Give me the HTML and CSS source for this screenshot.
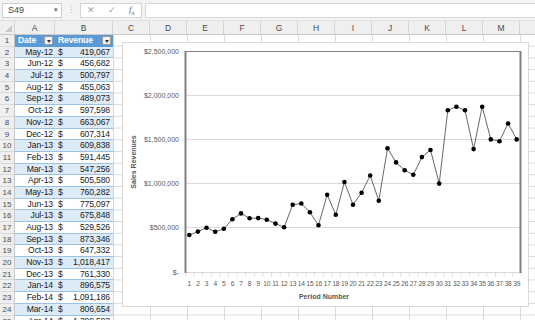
FILE: index.html
```html
<!DOCTYPE html>
<html>
    <head>
        <link rel="stylesheet" href="styles.css">
    </head>
    <body>
        <div class="toolbar">
            <div class="namebox">S49<span class="caret">&#9662;</span></div>
            <span class="grip">&#8942;</span>
            <div class="fxbox">
                <span class="fxicon">&#10005;</span>
                <span class="fxicon">&#10003;</span>
                <span class="fxicon fx"><i>f</i><sub>x</sub></span>
            </div>
            <div class="formula"></div>
        </div>

        <div class="colheads">
            <div class="corner"></div>
            <div class="ch col-a">A</div>
            <div class="ch col-b">B</div>
            <div class="ch">C</div>
            <div class="ch">D</div>
            <div class="ch">E</div>
            <div class="ch">F</div>
            <div class="ch">G</div>
            <div class="ch">H</div>
            <div class="ch">I</div>
            <div class="ch">J</div>
            <div class="ch">K</div>
            <div class="ch">L</div>
            <div class="ch">M</div>
            <div class="ch"></div>
        </div>

        <div class="sheet">
            <div class="rownums">
                <div>1</div><div>2</div><div>3</div><div>4</div><div>5</div>
                <div>6</div><div>7</div><div>8</div><div>9</div><div>10</div>
                <div>11</div><div>12</div><div>13</div><div>14</div><div>15</div>
                <div>16</div><div>17</div><div>18</div><div>19</div><div>20</div>
                <div>21</div><div>22</div><div>23</div><div>24</div><div>25</div>
            </div>

            <div class="table">
                <div class="row head">
                    <div class="cell-a">Date<span class="filter"></span></div>
                    <div class="cell-b">Revenue<span class="filter"></span></div>
                </div>
                <div class="row band"><div class="cell-a">May-12</div><div class="cell-b"><span>$</span>419,067</div></div>
                <div class="row"><div class="cell-a">Jun-12</div><div class="cell-b"><span>$</span>456,682</div></div>
                <div class="row band"><div class="cell-a">Jul-12</div><div class="cell-b"><span>$</span>500,797</div></div>
                <div class="row"><div class="cell-a">Aug-12</div><div class="cell-b"><span>$</span>455,063</div></div>
                <div class="row band"><div class="cell-a">Sep-12</div><div class="cell-b"><span>$</span>489,073</div></div>
                <div class="row"><div class="cell-a">Oct-12</div><div class="cell-b"><span>$</span>597,598</div></div>
                <div class="row band"><div class="cell-a">Nov-12</div><div class="cell-b"><span>$</span>663,067</div></div>
                <div class="row"><div class="cell-a">Dec-12</div><div class="cell-b"><span>$</span>607,314</div></div>
                <div class="row band"><div class="cell-a">Jan-13</div><div class="cell-b"><span>$</span>609,838</div></div>
                <div class="row"><div class="cell-a">Feb-13</div><div class="cell-b"><span>$</span>591,445</div></div>
                <div class="row band"><div class="cell-a">Mar-13</div><div class="cell-b"><span>$</span>547,256</div></div>
                <div class="row"><div class="cell-a">Apr-13</div><div class="cell-b"><span>$</span>505,580</div></div>
                <div class="row band"><div class="cell-a">May-13</div><div class="cell-b"><span>$</span>760,282</div></div>
                <div class="row"><div class="cell-a">Jun-13</div><div class="cell-b"><span>$</span>775,097</div></div>
                <div class="row band"><div class="cell-a">Jul-13</div><div class="cell-b"><span>$</span>675,848</div></div>
                <div class="row"><div class="cell-a">Aug-13</div><div class="cell-b"><span>$</span>529,526</div></div>
                <div class="row band"><div class="cell-a">Sep-13</div><div class="cell-b"><span>$</span>873,346</div></div>
                <div class="row"><div class="cell-a">Oct-13</div><div class="cell-b"><span>$</span>647,332</div></div>
                <div class="row band"><div class="cell-a">Nov-13</div><div class="cell-b"><span>$</span>1,018,417</div></div>
                <div class="row"><div class="cell-a">Dec-13</div><div class="cell-b"><span>$</span>761,330</div></div>
                <div class="row band"><div class="cell-a">Jan-14</div><div class="cell-b"><span>$</span>896,575</div></div>
                <div class="row"><div class="cell-a">Feb-14</div><div class="cell-b"><span>$</span>1,091,186</div></div>
                <div class="row band"><div class="cell-a">Mar-14</div><div class="cell-b"><span>$</span>806,654</div></div>
                <div class="row"><div class="cell-a">Apr-14</div><div class="cell-b"><span>$</span>1,399,593</div></div>
            </div>

            <div class="cells">
                <svg class="chart" width="407" height="265" viewBox="121 42 407 265">
                    <defs>
                        <marker id="dot" markerUnits="userSpaceOnUse" markerWidth="6" markerHeight="6" refX="3" refY="3">
                            <circle cx="3" cy="3" r="2.3" fill="#000"/>
                        </marker>
                    </defs>
                    <rect x="121.5" y="42.5" width="406" height="264" fill="#fff" stroke="#d9d9d9"/>

                    <!-- gridlines -->
                    <g stroke="#d9d9d9" stroke-width="1">
                        <line x1="184" y1="95.5" x2="520" y2="95.5"/>
                        <line x1="184" y1="139.5" x2="520" y2="139.5"/>
                        <line x1="184" y1="183.5" x2="520" y2="183.5"/>
                        <line x1="184" y1="227.5" x2="520" y2="227.5"/>
                        <line x1="184" y1="272.5" x2="520" y2="272.5"/>
                    </g>
                    <line x1="184" y1="274.5" x2="521" y2="274.5" stroke="#d9d9d9" stroke-width="4" stroke-dasharray="0.8 7.815"/>

                    <!-- plot frame -->
                    <line x1="184" y1="51.5" x2="520" y2="51.5" stroke="#7f7f7f" stroke-width="1.2"/>
                    <line x1="184.5" y1="51" x2="184.5" y2="273" stroke="#7f7f7f" stroke-width="2"/>
                    <line x1="519.5" y1="51" x2="519.5" y2="273" stroke="#7f7f7f" stroke-width="2"/>

                    <g class="ylab" text-anchor="end">
                        <text x="178" y="54">$2,500,000</text>
                        <text x="178" y="98">$2,000,000</text>
                        <text x="178" y="142">$1,500,000</text>
                        <text x="178" y="186">$1,000,000</text>
                        <text x="178" y="230">$500,000</text>
                        <text x="178" y="275">$-</text>
                    </g>
                    <text class="axtitle" transform="translate(135 162) rotate(-90)" text-anchor="middle">Sales Revenues</text>

                    <polyline fill="none" stroke="#404040" stroke-width="0.8" marker-start="url(#dot)" marker-mid="url(#dot)" marker-end="url(#dot)"
                        points="188.3,235 196.9,231.6 205.5,227.7 214.2,231.8 222.8,228.8 231.4,219.2 240,213.4 248.6,218.3 257.2,218.1 265.8,219.7 274.5,223.6 283.1,227.3 291.7,204.8 300.3,203.5 308.9,212.3 317.5,225.2 326.2,194.8 334.8,214.8 343.4,182 352,204.7 360.6,192.7 369.2,175.5 377.8,200.7 386.5,148.3 395.1,162.4 403.7,170.3 412.3,174.8 420.9,157.1 429.5,150 438.2,183.6 446.8,110.2 455.4,106.7 464,110.2 472.6,149.1 481.2,106.7 489.8,139.4 498.5,141.2 507.1,123.5 515.7,139.4"/>

                    <g class="xlab" text-anchor="middle">
                        <text x="188.3" y="286">1</text><text x="196.9" y="286">2</text><text x="205.5" y="286">3</text>
                        <text x="214.2" y="286">4</text><text x="222.8" y="286">5</text><text x="231.4" y="286">6</text>
                        <text x="240" y="286">7</text><text x="248.6" y="286">8</text><text x="257.2" y="286">9</text>
                        <text x="265.8" y="286">10</text><text x="274.5" y="286">11</text><text x="283.1" y="286">12</text>
                        <text x="291.7" y="286">13</text><text x="300.3" y="286">14</text><text x="308.9" y="286">15</text>
                        <text x="317.5" y="286">16</text><text x="326.2" y="286">17</text><text x="334.8" y="286">18</text>
                        <text x="343.4" y="286">19</text><text x="352" y="286">20</text><text x="360.6" y="286">21</text>
                        <text x="369.2" y="286">22</text><text x="377.8" y="286">23</text><text x="386.5" y="286">24</text>
                        <text x="395.1" y="286">25</text><text x="403.7" y="286">26</text><text x="412.3" y="286">27</text>
                        <text x="420.9" y="286">28</text><text x="429.5" y="286">29</text><text x="438.2" y="286">30</text>
                        <text x="446.8" y="286">31</text><text x="455.4" y="286">32</text><text x="464" y="286">33</text>
                        <text x="472.6" y="286">34</text><text x="481.2" y="286">35</text><text x="489.8" y="286">36</text>
                        <text x="498.5" y="286">37</text><text x="507.1" y="286">38</text><text x="515.7" y="286">39</text>
                    </g>
                    <text class="axtitle" x="323" y="299" text-anchor="middle">Period Number</text>
                </svg>
            </div>
        </div>
    </body>
</html>
```

FILE: styles.css
```css
/* sheet window */
body{
    margin: 0;
    width: 535px;
    height: 320px;
    overflow: hidden;
    background: #fff;
    font-family: "Liberation Sans", Arial, sans-serif;
    color: #222;
}

/* formula bar */
.toolbar{
    height: 20px;
    display: flex;
    align-items: center;
    background: #f3f3f3;
    padding-left: 2px;
}
.namebox{
    box-sizing: border-box;
    width: 60px;
    height: 15px;
    display: flex;
    align-items: center;
    padding-left: 5px;
    background: #fff;
    border: 1px solid #cfcfcf;
    font-size: 9px;
    color: #444;
}
.caret{
    margin-left: auto;
    padding-right: 3px;
    font-size: 7px;
    color: #666;
}
.grip{
    width: 18px;
    text-align: center;
    color: #b5b5b5;
    font-size: 9px;
}
.fxbox{
    box-sizing: border-box;
    width: 62px;
    height: 15px;
    display: flex;
    align-items: center;
    justify-content: space-around;
    background: #fff;
    border: 1px solid #d6d6d6;
    color: #a0a0a0;
    font-size: 9px;
}
.fx{
    color: #666;
    font-family: "Liberation Serif", serif;
    font-size: 9px;
}
.fx sub{
    font-size: 6px;
}
.formula{
    flex: 1;
    height: 15px;
    margin-left: 3px;
    box-sizing: border-box;
    background: #fff;
    border: 1px solid #d6d6d6;
    border-right: 0;
}

/* column letters */
.colheads{
    height: 15px;
    display: flex;
    background: #efefef;
    border-top: 1px solid #e0e0e0;
    box-sizing: border-box;
    border-bottom: 1px solid #c9c9c9;
}
.corner{
    width: 15px;
    flex: none;
    position: relative;
    box-sizing: border-box;
    border-right: 1px solid #d4d4d4;
}
.corner::after{
    content: "";
    position: absolute;
    right: 2px;
    bottom: 2px;
    border-left: 7px solid transparent;
    border-bottom: 7px solid #c9c9c9;
}
.ch{
    flex: none;
    width: 37px;
    box-sizing: border-box;
    border-right: 1px solid #d4d4d4;
    text-align: center;
    font-size: 8.5px;
    line-height: 14px;
    color: #4a4a4a;
}
.col-a{ width: 40px; }
.col-b{ width: 58px; }

/* grid */
.sheet{
    display: flex;
    height: 285px;
}
.rownums{
    width: 15px;
    flex: none;
    background: #efefef;
    box-sizing: border-box;
    border-right: 1px solid #c9c9c9;
}
.rownums div{
    height: 11.7px;
    box-sizing: border-box;
    border-bottom: 1px solid #dadada;
    text-align: center;
    font-size: 8px;
    line-height: 11px;
    color: #4a4a4a;
}

.table{
    width: 98px;
    flex: none;
    border-right: 1px solid #d4d4d4;
    box-sizing: content-box;
}
.row{
    display: flex;
    height: 11.7px;
    box-sizing: border-box;
    border-bottom: 1px solid #9bc2e6;
    font-size: 8.6px;
    line-height: 11px;
    letter-spacing: -0.15px;
}
.band{
    background: #ddebf7;
}
.cell-a{
    width: 40px;
    box-sizing: border-box;
    padding-right: 2px;
    text-align: right;
}
.cell-b{
    width: 58px;
    box-sizing: border-box;
    padding: 0 3px 0 3px;
    display: flex;
    justify-content: space-between;
}
.head{
    background: #5b9bd5;
    color: #fff;
    font-weight: bold;
    border-bottom: 0;
}
.head .cell-a, .head .cell-b{
    display: flex;
    align-items: center;
    justify-content: space-between;
    text-align: left;
    padding: 0 2px 0 3px;
}
.filter{
    width: 9px;
    height: 9px;
    box-sizing: border-box;
    background: #f2f2f2;
    border: 1px solid #9a9a9a;
    position: relative;
}
.filter::after{
    content: "";
    position: absolute;
    left: 1.5px;
    top: 2.5px;
    border-left: 2.5px solid transparent;
    border-right: 2.5px solid transparent;
    border-top: 3px solid #333;
}

.cells{
    flex: 1;
    position: relative;
    background:
        linear-gradient(to left, #dadada 1px, transparent 1px) 0 0 / 37px 100%,
        linear-gradient(to top, #dadada 1px, transparent 1px) 0 0 / 100% 11.7px;
}
.chart{
    position: absolute;
    left: 8px;
    top: 7px;
    font-family: "Liberation Sans", Arial, sans-serif;
}
.ylab, .xlab{
    font-size: 7px;
    fill: #595959;
}
.xlab{
    font-size: 6.6px;
    letter-spacing: -0.2px;
}
.axtitle{
    font-size: 7px;
    font-weight: bold;
    fill: #595959;
}
```
